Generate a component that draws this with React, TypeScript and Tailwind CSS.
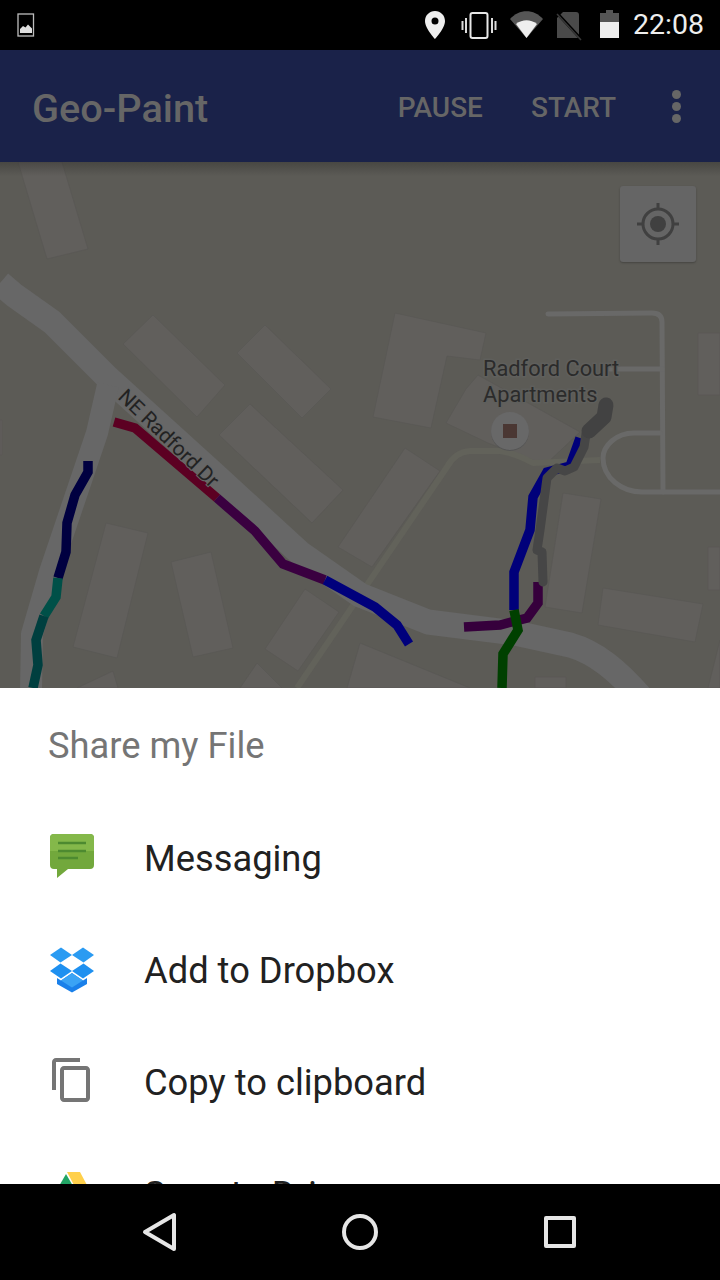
const font = { fontFamily: 'Roboto, sans-serif' }

function StatusBar() {
  return (
    <div className="flex h-[50px] shrink-0 items-center justify-between bg-black pl-[17px] pr-[16px]">
      <svg width="18" height="24" viewBox="0 0 18 24">
        <rect x="1" y="1" width="15.5" height="22" fill="none" stroke="#bdbdbd" strokeWidth="1.3" />
        <path d="M3 20v-4l3-3 2.5 1.5L11 11.5l4 4V20z" fill="#e0e0e0" />
      </svg>
      <div className="flex items-center">
        <svg width="200" height="32" viewBox="424 9 200 32">
          <path fillRule="evenodd" d="M435 11c-5.6 0-10 4.4-10 10 0 7.5 10 18 10 18s10-10.5 10-18c0-5.6-4.4-10-10-10zm0 13.5a3.5 3.5 0 1 1 0-7 3.5 3.5 0 0 1 0 7z" fill="#eeeeee" />
          <rect x="470.5" y="13" width="17" height="25" rx="2" fill="none" stroke="#e8e8e8" strokeWidth="2" />
          <path d="M466 18v15M462.5 21v9M492 18v15M495.5 21v9" stroke="#dcdcdc" strokeWidth="2" />
          <path d="M510 19c9-10.5 24-10.5 33 0L526.5 38z" fill="#555555" />
          <path d="M516 24c6.5-5 14.5-5 21 0L526.5 38z" fill="#eeeeee" />
          <path d="M563 12h13a3 3 0 0 1 3 3v23h-22V18z" fill="#4a4a4a" />
          <path d="M557 13l24 26" stroke="#000000" strokeWidth="3" />
          <path d="M557 14l24 26" stroke="#383838" strokeWidth="1.5" />
          <path d="M606 10h7v3h6v9h-19v-9h6z" fill="#555555" />
          <rect x="600" y="22" width="19" height="16" fill="#eeeeee" />
        </svg>
        <span className="ml-[9px] text-[28.5px] leading-none text-[#eeeeee]" style={font}>22:08</span>
      </div>
    </div>
  )
}

function AppBar() {
  return (
    <div className="flex h-[112px] shrink-0 items-center bg-[#1a2249] pl-[32px] text-[#666666]" style={font}>
      <span className="mt-[5px] flex-1 text-[39.7px] font-medium leading-none">Geo-Paint</span>
      <span className="mt-[3px] text-[28px] font-medium leading-none">PAUSE</span>
      <span className="ml-[48px] mt-[3px] text-[28px] font-medium leading-none">START</span>
      <div className="ml-[56px] mr-[39px] flex flex-col gap-[3px]">
        <div className="h-[9px] w-[9px] rounded-full bg-[#666666]" />
        <div className="h-[9px] w-[9px] rounded-full bg-[#666666]" />
        <div className="h-[9px] w-[9px] rounded-full bg-[#666666]" />
      </div>
    </div>
  )
}

const buildings = [
  '18,162 62,162 88,249 47,259',
  '153,315 225,385 197,417 123,344',
  '265,325 331,389 302,418 237,353',
  '250,404 343,490 312,523 219,435',
  '106,523 148,533 117,658 73,647',
  '211,552 233,648 193,657 171,562',
  '305,589 339,612 298,671 265,649',
  '338,547 405,448 440,471 372,567',
  '240,688 257,663 282,688',
  '77,688 113,671 118,688',
  '347,688 360,643 470,688',
  '395,313 486,333 480,360 447,356 431,428 373,417',
  '446,423 466,389 478,375 580,432 545,465 488,443',
  '563,493 601,499 582,613 545,607',
  '603,588 703,604 695,642 598,625',
  '698,333 720,333 720,395 698,395',
  '708,547 720,547 720,590 708,590',
  '708,688 720,640 720,688',
  '535,677 566,677 566,688 535,688',
  '0,420 2,420 2,455 0,455',
]

const tracks = [
  { color: '#000040', d: 'M88 461V472L75 495 67 523 66 552 58 578' },
  { color: '#005048', d: 'M58 578L56 597 44 616' },
  { color: '#003f3f', d: 'M44 616L36 640 38 665 33 688' },
  { color: '#5c0022', d: 'M114 422L135 428 217 498' },
  { color: '#3a0040', d: 'M217 498L255 531 283 564 325 580' },
  { color: '#00007c', d: 'M325 580L375 607 397 625 409 644' },
  { color: '#36003c', d: 'M464 627L500 625 527 618 538 603V582' },
  { color: '#00007a', d: 'M514 610V572L530 530 533 497 547 472 570 466 580 438' },
  { color: '#004000', d: 'M514 610L518 630 503 654 502 688' },
]

function MapView() {
  return (
    <div className="relative h-[526px] shrink-0 overflow-hidden bg-[#5c5b56]">
      <svg className="block" width="720" height="526" viewBox="0 162 720 526" fill="none">
        {buildings.map((points) => (
          <polygon key={points} points={points} fill="#615f5c" stroke="#595854" strokeWidth="0.7" />
        ))}
        <path d="M297 688L447 467Q455 452 470 451H500Q515 453 533 463L600 460" stroke="#62625a" strokeWidth="6" strokeLinejoin="round" />
        <g stroke="#696968" strokeWidth="5" strokeLinejoin="round" strokeLinecap="round">
          <path d="M548 314L652 313Q662 313 662 322L663 492" />
          <path d="M610 369H662" />
          <path d="M660 433H634C616 433 603 446 603 458C603 478 622 492 642 492H720" />
        </g>
        <g stroke="#676767" strokeLinejoin="round">
          <path d="M0 283L14 295 52 322 108 378 215 475 300 553 360 595 428 622 515 633 570 645C595 652 618 670 645 702" strokeWidth="25" />
          <path d="M108 385L97 433 50 572 32 634 31 690" strokeWidth="22" />
        </g>
        {tracks.map((t) => (
          <path key={t.d} d={t.d} stroke={t.color} strokeWidth="9.5" />
        ))}
        <path d="M543 582L542 552 537 550 540 530 547 478 557 468 565 471 574 467 584 447 586 434" stroke="#464646" strokeWidth="9" strokeLinejoin="round" strokeLinecap="round" />
        <path d="M606 405L604 417 589 431" stroke="#424242" strokeWidth="15" strokeLinejoin="round" strokeLinecap="round" />
        <circle cx="510" cy="432" r="19" fill="#555555" />
        <circle cx="510" cy="431" r="19" fill="#686868" />
        <rect x="503" y="424" width="14" height="14" fill="#4a3733" />
        <g className="[paint-order:stroke]" fill="#2b2b2b" stroke="#5f5f5c" strokeWidth="3" fontSize="21.8" style={font}>
          <text x="483" y="376">Radford Court</text>
          <text x="483" y="402">Apartments</text>
        </g>
        <text className="[paint-order:stroke]" transform="translate(117 398) rotate(44)" fill="#222222" stroke="#666666" strokeWidth="2" fontSize="20.7" style={font}>NE Radford Dr</text>
      </svg>
      <div className="absolute inset-x-0 top-0 h-[14px] bg-gradient-to-b from-[#33322f]/50 to-transparent" />
      <div className="absolute left-[620px] top-[24px] flex h-[76px] w-[76px] items-center justify-center rounded-[3px] bg-[#656565] shadow-[0_1px_2px_rgba(0,0,0,0.25)]">
        <svg width="44" height="44" viewBox="0 0 44 44" fill="none">
          <circle cx="22" cy="22" r="15" stroke="#404040" strokeWidth="3" />
          <circle cx="22" cy="22" r="8" fill="#404040" />
          <path d="M22 1v6M22 37v6M1 22h6M37 22h6" stroke="#404040" strokeWidth="3" />
        </svg>
      </div>
    </div>
  )
}

function MessagingIcon() {
  return (
    <svg width="48" height="48" viewBox="0 0 48 48">
      <path d="M6 0H42A4 4 0 0 1 46 4V31A4 4 0 0 1 42 35H20L9 44V35H6A4 4 0 0 1 2 31V4A4 4 0 0 1 6 0Z" fill="#72a83c" />
      <path d="M6 0H42A4 4 0 0 1 46 4V17H2V4A4 4 0 0 1 6 0Z" fill="#84b84a" />
      <path d="M10 9H38M10 17H38M10 24H30" stroke="#4d8a30" strokeWidth="2.5" />
    </svg>
  )
}

function DropboxIcon() {
  return (
    <svg width="48" height="48" viewBox="0 0 48 48">
      <path d="M13 2L1 10l11 8-11 8 12 8 11-8 11 8 12-8-11-8 11-8-12-8-11 8z" fill="#ffffff" />
      <path d="M13 1.5L2 9l10.5 7.5L24 9z" fill="#2a9bf2" />
      <path d="M35 1.5L46 9l-10.500 7.500L24 9z" fill="#2a9bf2" />
      <path d="M12.5 17.500L2 25l11 7.500L24 25z" fill="#1e90f0" />
      <path d="M35.5 17.500L46 25l-11 7.500L24 25z" fill="#1e90f0" />
      <path d="M24 27l-11 7.5-4-2.5v6l15 8.5L39 38v-6l-4 2.5z" fill="#1a80ea" />
      <path d="M24 27l-11 7.5 11 7 11-7z" fill="#3aa3f5" />
    </svg>
  )
}

function CopyIcon() {
  return (
    <svg width="48" height="48" viewBox="0 1 24 24">
      <path d="M16 1H4c-1.1 0-2 .9-2 2v14h2V3h12V1zm3 4H8c-1.1 0-2 .9-2 2v14c0 1.1.9 2 2 2h11c1.1 0 2-.9 2-2V7c0-1.1-.9-2-2-2zm0 16H8V7h11v14z" fill="#757575" />
    </svg>
  )
}

function DriveIcon() {
  return (
    <svg width="48" height="48" viewBox="0 -2 48 48">
      <path d="M18 2l-15 26h14l8-14z" fill="#21a464" />
      <path d="M19 0h13l15 28H34z" fill="#ffd04b" />
    </svg>
  )
}

const shareItems = [
  { label: 'Messaging', icon: <MessagingIcon /> },
  { label: 'Add to Dropbox', icon: <DropboxIcon /> },
  { label: 'Copy to clipboard', icon: <CopyIcon /> },
  { label: 'Save to Drive', icon: <DriveIcon /> },
]

function ShareSheet() {
  return (
    <div className="min-h-0 flex-1 overflow-hidden bg-white" style={font}>
      <div className="flex h-[114px] items-center pl-[48px] pt-[2px] text-[36.3px] leading-none text-[#757575]">Share my File</div>
      {shareItems.map((item) => (
        <div key={item.label} className="flex h-[112px] items-center pl-[48px]">
          <div className="w-[96px] shrink-0">{item.icon}</div>
          <span className="mt-[2px] text-[36.3px] leading-none text-[#212121]">{item.label}</span>
        </div>
      ))}
    </div>
  )
}

function NavBar() {
  return (
    <div className="flex h-[96px] shrink-0 items-center justify-between bg-black pl-[142px] pr-[144px]">
      <svg width="34" height="40" viewBox="0 0 34 40" fill="none">
        <path d="M32 3v34L3 20z" stroke="#e6e6e6" strokeWidth="4" strokeLinejoin="round" />
      </svg>
      <div className="h-[36px] w-[36px] rounded-full border-[4px] border-[#e6e6e6]" />
      <div className="h-[32px] w-[32px] rounded-[2px] border-[4px] border-[#e6e6e6]" />
    </div>
  )
}

export default function App() {
  return (
    <div className="flex h-[1280px] w-[720px] flex-col overflow-hidden">
      <StatusBar />
      <AppBar />
      <MapView />
      <ShareSheet />
      <NavBar />
    </div>
  )
}
